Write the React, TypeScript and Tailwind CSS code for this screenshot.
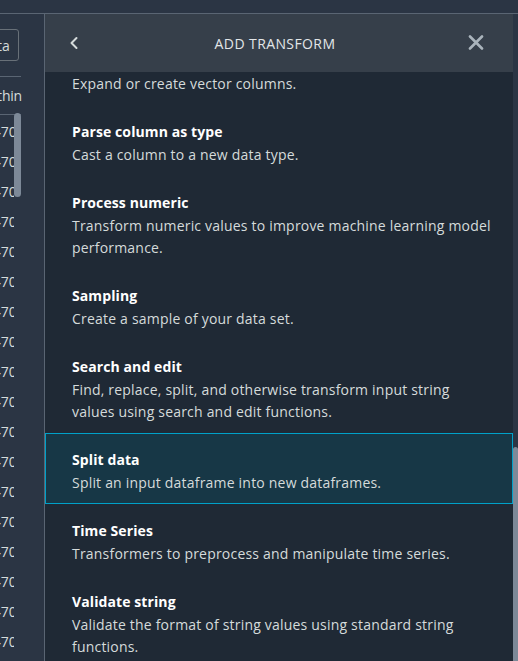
import React from 'react'

type Transform = { title: string; description: string; selected?: boolean }

const transforms: Transform[] = [
  { title: 'Manage vectors', description: 'Expand or create vector columns.' },
  { title: 'Parse column as type', description: 'Cast a column to a new data type.' },
  {
    title: 'Process numeric',
    description: 'Transform numeric values to improve machine learning model performance.',
  },
  { title: 'Sampling', description: 'Create a sample of your data set.' },
  {
    title: 'Search and edit',
    description:
      'Find, replace, split, and otherwise transform input string values using search and edit functions.',
  },
  { title: 'Split data', description: 'Split an input dataframe into new dataframes.', selected: true },
  { title: 'Time Series', description: 'Transformers to preprocess and manipulate time series.' },
  {
    title: 'Validate string',
    description: 'Validate the format of string values using standard string functions.',
  },
]

const rows = Array.from({ length: 18 }, (_, i) => i)

function TransformItem({ item }: { item: Transform }) {
  return (
    <div
      className={
        item.selected
          ? 'border border-[#00a1c9] bg-[#173746] pl-[26px] pr-[20px] pt-4 pb-[9px]'
          : 'border border-transparent pl-[26px] pr-[20px] pt-4 pb-[9px]'
      }
    >
      <div className="text-[14px] leading-[20px] font-bold tracking-[0.1px] text-white">{item.title}</div>
      <p className="mt-[2px] text-[14px] leading-[22px] tracking-[0.2px] text-[#d5dbdb]">{item.description}</p>
    </div>
  )
}

export default function App() {
  return (
    <div
      className="w-[518px] h-[661px] flex flex-col bg-[#2b3544] overflow-hidden"
      style={{ fontFamily: '"Open Sans", "Noto Sans", sans-serif' }}
    >
      {/* Top strip */}
      <div className="h-[14px] shrink-0 border-b border-[#5a6573]" />

      <div className="flex flex-1 min-h-0">
        {/* Left column (table behind the panel) */}
        <div className="relative w-[45px] shrink-0 border-r border-[#5a6573] overflow-hidden">
          <div className="mt-[15px] -ml-[41px] w-[60px] h-[32px] flex items-center justify-end pr-[8px] border border-[#687078] rounded-[3px] text-[14px] tracking-[0.1px] text-[#d5dbdb]">
            Data
          </div>
          <div className="mt-[15px] h-px w-[21px] bg-[#5a6573]" />
          <div className="w-[22px] h-[37px] overflow-hidden flex items-center justify-end whitespace-nowrap text-[14px] tracking-[-0.2px] text-[#d5dbdb]">
            <span>Somethin</span>
          </div>
          <div className="h-px w-[21px] bg-[#5a6573]" />
          <div className="mt-px flex flex-col">
            {rows.map((r) => (
              <div key={r} className="h-[30px] w-[14px] overflow-hidden flex items-center whitespace-nowrap text-[14px] text-[#d5dbdb]">
                <span className="-ml-[19px]">0.470</span>
              </div>
            ))}
          </div>
          <div className="absolute left-[14px] top-[99px] w-[7px] h-[84px] rounded-full bg-[#7d8998]" />
        </div>

        {/* Add transform panel */}
        <div className="flex-1 flex min-w-0">
          <div className="flex-1 flex flex-col min-w-0">
            <div className="h-[58px] shrink-0 bg-[#363f4a] flex items-center justify-between pl-[21px] pr-[29px]">
              <svg width="16" height="16" viewBox="0 0 16 16" fill="none">
                <path d="M10.5 3 L5.5 8 L10.5 13" stroke="#d5dbdb" strokeWidth="2" strokeLinecap="round" strokeLinejoin="round" />
              </svg>
              <div className="text-[14px] tracking-[0.4px] text-[#e3e6e8]">ADD TRANSFORM</div>
              <svg width="16" height="16" viewBox="0 0 16 16" fill="none">
                <path d="M2 1.5 L14 13.5 M14 1.5 L2 13.5" stroke="#aab4bc" strokeWidth="2.6" strokeLinecap="round" />
              </svg>
            </div>

            <div className="flex-1 min-h-0 overflow-hidden bg-[#1f2935]">
              <div className="-mt-[38px] flex flex-col">
                {transforms.map((t) => (
                  <TransformItem key={t.title} item={t} />
                ))}
              </div>
            </div>
          </div>

          {/* Panel scrollbar */}
          <div className="w-[5px] shrink-0 flex flex-col bg-[#2b3544]">
            <div className="h-[433px] shrink-0" />
            <div className="flex-1 rounded-t-[3px] bg-[#7d8998]" />
          </div>
        </div>
      </div>
    </div>
  )
}
